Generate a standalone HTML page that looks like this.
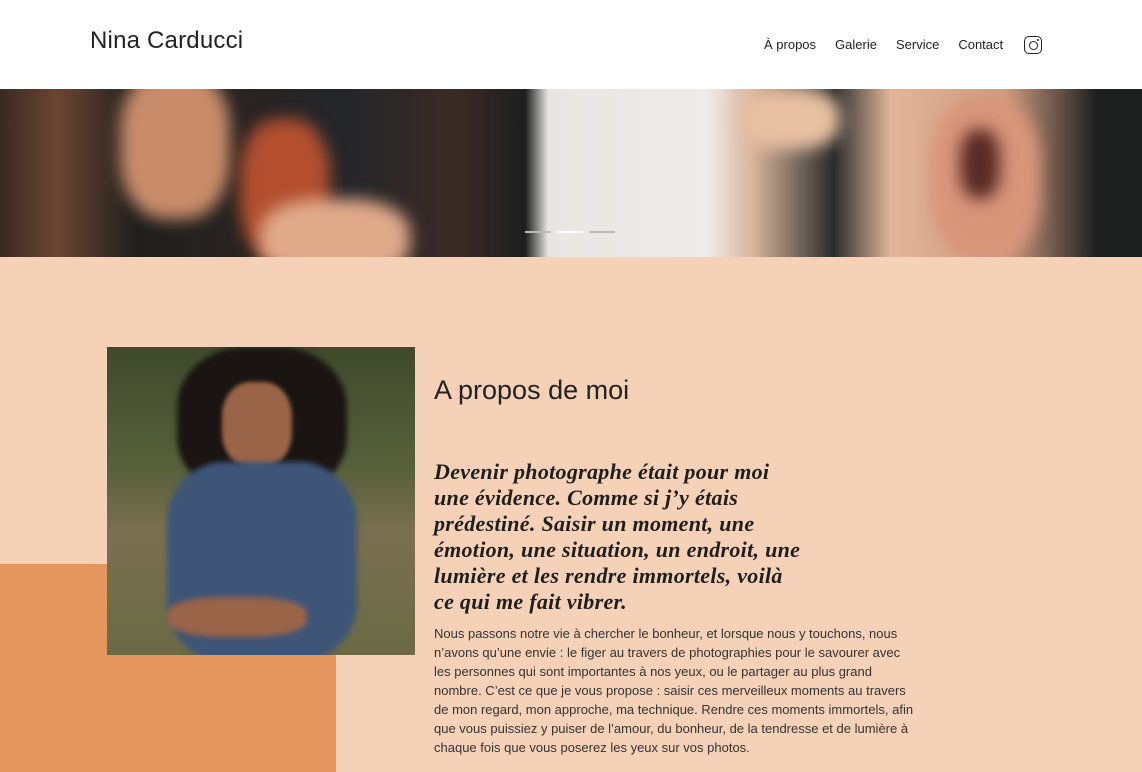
<!DOCTYPE html>
<html><head><meta charset="utf-8"><style>
*{margin:0;padding:0;box-sizing:border-box}
body{width:1142px;height:772px;overflow:hidden;background:#f5d1b7;font-family:"Liberation Sans",sans-serif;position:relative}
header{position:absolute;left:0;top:0;width:1142px;height:89px;background:#fff}
.logo{position:absolute;left:90px;top:27px;font-size:24px;color:#222;letter-spacing:0.2px}
nav{position:absolute;top:37px;left:764px;font-size:13px;color:#222;display:flex;gap:19px}
.ig{position:absolute;left:1024px;top:36px;width:18px;height:18px;border:1.6px solid #222;border-radius:5px}
.ig:before{content:"";position:absolute;left:3.5px;top:3.5px;width:7px;height:7px;border:1.6px solid #222;border-radius:50%}
.ig:after{content:"";position:absolute;right:2px;top:2px;width:2px;height:2px;background:#222;border-radius:50%}
.hero{position:absolute;left:0;top:89px;width:1142px;height:168px;overflow:hidden;
background:linear-gradient(90deg,#3a2a22 0,#6b4532 5%,#1f1f1d 12%,#2a2422 22%,#24262a 30%,#3b2a24 40%,#1d1e1f 46%,#e9e6e2 48%,#eeebe8 62%,#d8b39a 66%,#2a2c2c 73%,#e3b699 78%,#cf9b7f 88%,#1e2020 96%)}
.b{position:absolute;border-radius:40%;filter:blur(8px)}
.dots{position:absolute;top:231px;left:525px;display:flex;gap:6px}
.dots i{display:block;width:26px;height:2px;background:#bbb}
.dots i.a{background:#fff}
.orange{position:absolute;left:0;top:564px;width:336px;height:208px;background:#e5965f}
.photo{position:absolute;left:107px;top:347px;width:308px;height:308px;overflow:hidden;
background:linear-gradient(180deg,#3f4a2c 0,#59613b 40%,#7a7050 60%,#6b6a45 100%)}
h2{position:absolute;left:434px;top:375px;font-weight:normal;font-size:27px;color:#222}
.q{position:absolute;left:434px;top:459px;font-family:"Liberation Serif",serif;font-style:italic;font-weight:bold;font-size:22px;line-height:26px;color:#1e1e1e;letter-spacing:0.3px}
.p{position:absolute;left:434px;top:624px;font-size:13px;line-height:19px;color:#333}
</style></head><body>
<header><div class="logo">Nina Carducci</div>
<nav><span>À propos</span><span>Galerie</span><span>Service</span><span>Contact</span></nav>
<div class="ig"></div></header>
<div class="hero">
<div class="b" style="left:120px;top:-20px;width:110px;height:150px;background:#c88c6a"></div>
<div class="b" style="left:240px;top:30px;width:90px;height:140px;background:#b34f2f"></div>
<div class="b" style="left:260px;top:110px;width:150px;height:80px;background:#e0a98a"></div>
<div class="b" style="left:740px;top:0;width:100px;height:60px;background:#e8c0a2"></div>
<div class="b" style="left:930px;top:10px;width:110px;height:160px;background:#d9957a"></div>
<div class="b" style="left:960px;top:40px;width:40px;height:70px;background:#5a2a25"></div>
</div>
<div class="dots"><i></i><i class="a"></i><i></i></div>
<div class="orange"></div>
<div class="photo">
<div class="b" style="left:70px;top:0;width:170px;height:150px;background:#1a1512;filter:blur(3px)"></div>
<div class="b" style="left:115px;top:35px;width:70px;height:85px;background:#9a6448;filter:blur(2px)"></div>
<div class="b" style="left:60px;top:115px;width:190px;height:200px;background:#3e5578;filter:blur(3px);border-radius:30%"></div>
<div class="b" style="left:60px;top:250px;width:140px;height:40px;background:#9a6448;filter:blur(3px)"></div>
</div>
<h2>A propos de moi</h2>
<div class="q">Devenir photographe était pour moi<br>une évidence. Comme si j’y étais<br>prédestiné. Saisir un moment, une<br>émotion, une situation, un endroit, une<br>lumière et les rendre immortels, voilà<br>ce qui me fait vibrer.</div>
<div class="p">Nous passons notre vie à chercher le bonheur, et lorsque nous y touchons, nous<br>n’avons qu’une envie : le figer au travers de photographies pour le savourer avec<br>les personnes qui sont importantes à nos yeux, ou le partager au plus grand<br>nombre. C’est ce que je vous propose : saisir ces merveilleux moments au travers<br>de mon regard, mon approche, ma technique. Rendre ces moments immortels, afin<br>que vous puissiez y puiser de l’amour, du bonheur, de la tendresse et de lumière à<br>chaque fois que vous poserez les yeux sur vos photos.</div>
</body></html>
